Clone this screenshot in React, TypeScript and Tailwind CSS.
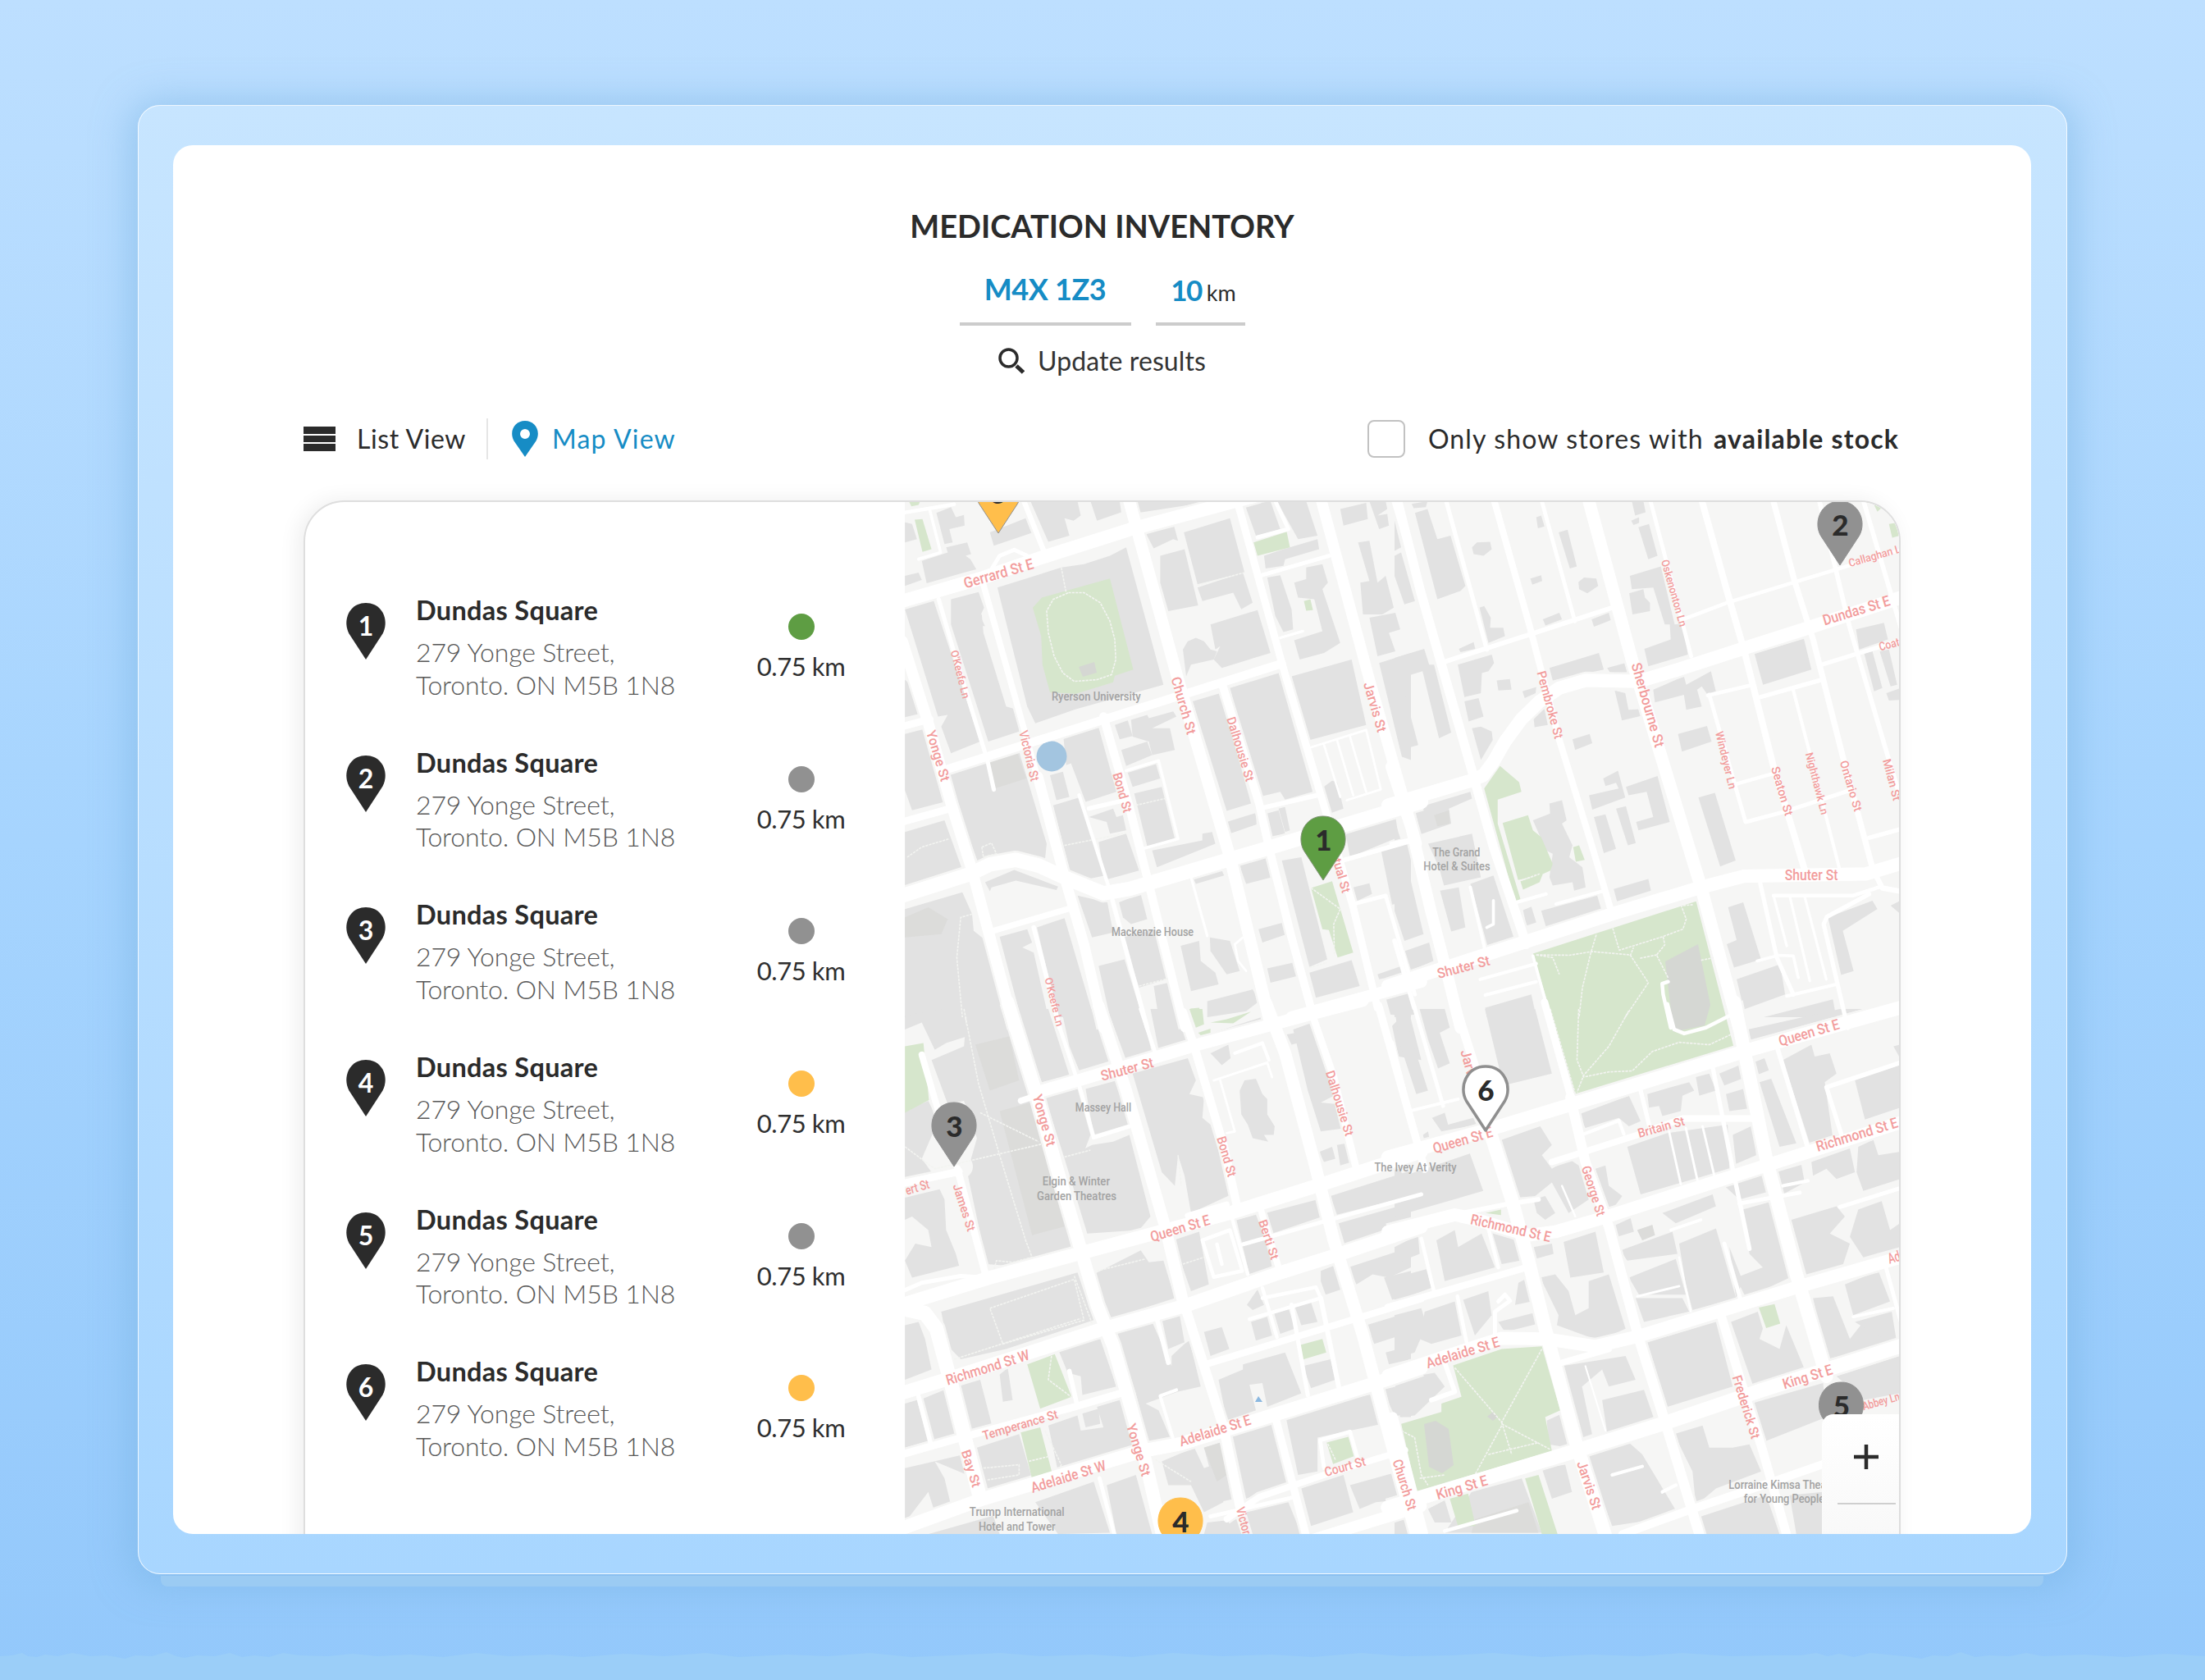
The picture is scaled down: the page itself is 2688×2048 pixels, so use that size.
import React from "react";

type Road = [number, string];
type Label = [string, number, number, number, number, number];
type Tile = {
  transform: string;
  blocks: string[];
  shade: string[];
  parks: string[];
  roads: Road[];
  paths: string[];
  streets: Label[];
  places: Label[];
};

const northWest: Tile = {
  transform: "translate(1100 600) scale(0.39541 0.40816)",
  blocks: [
    "8,90 30,95 45,140 8,150", "105,62 150,45 165,75 190,68 192,100 145,110 155,150 130,155", "60,205 140,180 135,165 200,150 212,185 195,190 210,200 228,230 190,240 75,272", "8,250 50,240 60,262 8,280",
    "270,120 380,78 398,122 282,160", "395,27 540,27 550,70 528,85 500,78 515,130 450,148", "580,27 670,27 675,60 600,85", "718,27 960,27 725,62",
    "8,350 95,320 240,745 150,780 120,700 140,665 110,670", "150,320 235,298 252,345 240,370 255,400 150,395", "150,395 245,365 250,420 320,640 355,650 360,715 265,745", "8,560 35,585 60,660 8,672", "8,722 65,708 130,925 30,950 8,890",
    "293,285 490,225 560,215 640,190 690,165 805,575 535,648 410,690 385,640", "8,1015 130,980 185,1128 8,1180", "130,835 360,775 445,1050 440,1095 340,1080 235,1110", "8,1245 185,1195 215,1260 220,1310 265,1345 330,1568 8,1568",
    "255,1165 345,1128 480,1178 475,1188 350,1160 275,1180 270,1192", "300,1328 385,1305 400,1345 370,1360 405,1375 450,1568 365,1568", "415,1300 500,1272 590,1568 480,1568", "540,1205 632,1225 650,1315 585,1330",
    "497,735 605,702 660,895 565,925 520,810 505,815", "455,845 495,835 515,910 475,920", "465,935 545,912 625,1145 525,1165", "750,122 838,102 850,145 835,140 775,168", "868,120 1010,78 1055,240 910,275", "795,190 870,170 912,338 820,355 795,270",
    "910,285 1050,240 1080,330 1045,350 1020,300 925,325", "950,395 1095,352 1135,480 985,525 960,500 980,460 965,470", "875,550 865,470 880,445 905,435 930,445 950,470 970,475 960,500 890,515", "1057,40 1135,27 1165,110 1090,130", "1155,27 1245,27 1280,130 1220,140", "1115,190 1175,170 1280,140 1285,170 1180,200 1175,220 1120,228",
    "1125,255 1165,248 1200,350 1205,410 1175,418 1150,370", "1208,270 1245,260 1245,225 1295,215 1312,270 1295,290 1350,450 1300,480 1225,500 1208,442 1295,415 1270,320 1220,315", "1200,550 1385,500 1430,695 1250,742", "895,625 980,600 1075,930 1000,952", "1010,585 1160,540 1265,895 1180,918 1165,895 1100,910",
    "655,695 695,682 710,728 670,738", "705,680 755,665 760,675 835,655 845,670 770,705 825,705 840,770 770,785 760,745 710,730", "675,770 755,745 770,785 690,818", "695,838 782,812 795,855 710,880", "715,900 800,880 840,1035 755,1058",
    "575,970 650,945 660,970 680,965 690,1010 640,1020 630,985", "605,1045 690,1020 730,1130 625,1158", "770,1070 925,1040 925,1020 955,1015 965,1050 785,1120", "1000,985 1090,958 1092,992 1010,1020", "1115,962 1160,950 1180,1020 1140,1028", "1160,945 1180,940 1195,1010 1180,1015",
    "1285,890 1325,862 1340,865 1360,945 1310,962", "1350,50 1430,32 1435,80 1360,100", "1440,27 1490,27 1495,50 1465,70 1495,65 1500,100 1470,110", "1405,150 1440,145 1465,270 1490,250 1515,345 1480,365 1420,365 1412,270 1440,265", "1440,375 1520,360 1535,410 1500,420 1520,475 1465,490", "1470,510 1568,480 1568,800 1540,790",
    "1365,1010 1520,968 1530,1030 1380,1090", "1170,1100 1230,1090 1310,1395 1255,1418", "1255,1435 1385,1398 1410,1475 1275,1510", "898,1155 985,1130 992,1145 905,1170", "1038,1112 1120,1092 1138,1150 1060,1170", "1475,1065 1568,1045 1568,1220 1510,1232", "1390,1180 1440,1168 1448,1200 1400,1222",
    "668,1225 735,1200 755,1275 705,1290 680,1270", "1098,1305 1175,1285 1180,1322 1110,1345", "1125,1422 1205,1405 1218,1445 1135,1465", "605,1415 685,1395 740,1568 640,1568", "680,1330 780,1305 830,1450 730,1480", "858,1355 915,1340 920,1400 965,1435 975,1470 890,1490", "948,1330 1010,1340 1040,1430 1000,1440 950,1370", "775,1475 820,1465 845,1550 790,1568", "940,1520 1080,1485 1100,1520 1060,1550 940,1568", "1490,1508 1568,1490 1568,1568 1505,1560", "1465,1440 1540,1415 1545,1440 1470,1455",
  ],
  shade: ["265,800 355,778 382,855 285,885", "8,1270 80,1240 140,1275 120,1320 8,1330"],
  parks: [
    "430,315 640,258 712,530 655,548 650,568 535,602 455,598 432,515 428,430 402,345", "1083,150 1185,118 1195,165 1095,190", "1238,325 1258,320 1266,352 1245,354", "1260,1182 1325,1162 1390,1375 1342,1390 1315,1308 1295,1305", "38,82 62,80 90,170 62,178", "20,27 55,27 50,38 28,42", "888,1542 915,1540 925,1568 895,1568",
  ],
  roads: [
    [40, "-10,328 250,255 430,195 700,112 1100,8"], [34, "0,445 80,690 150,930 215,1130 262,1300 345,1600"], [13, "112,320 160,480 262,800 282,888"], [19, "248,270 370,690 430,900"], [32, "418,850 500,1150 560,1350 620,1600"],
    [26, "130,830 700,655 1170,512"], [37, "692,0 740,170 850,560 1010,1090 1135,1590"], [26, "620,670 700,940 760,1170 870,1600"], [25, "985,570 1100,930 1130,1060 1200,1330 1265,1560"], [23, "1025,0 1170,510 1310,970 1390,1240 1465,1540"], [34, "1285,0 1440,560 1585,1050"],
    [43, "-10,1208 210,1140 270,1112 350,1098 420,1115 510,1155 620,1198 700,1185 1120,1065 1600,925"], [22, "0,700 85,678"], [22, "0,985 155,943"], [36, "1200,1568 1600,1462"], [18, "280,1310 520,1242"], [14, "405,1300 485,1600"], [14, "648,1220 755,1600"], [11, "545,905 640,1190"], [13, "575,945 695,918"],
    [9, "690,832 790,802 850,1035 740,1065"], [12, "1390,1230 1490,1205 1580,1500"], [8, "890,1150 940,1325"], [14, "1350,1102 1580,1038"], [14, "1100,945 1280,905"], [12, "1100,250 1315,190"], [7, "1250,765 1430,710 1475,888 1370,920"], [7, "1300,755 1350,910"], [7, "1340,740 1390,905"], [7, "1380,730 1430,895"],
    [16, "375,27 440,185"], [11, "0,62 160,36"], [9, "85,55 118,180 50,200"], [20, "1510,0 1590,260"], [12, "1095,135 1190,110 1150,27"], [12, "275,230 300,190 345,172 385,190"], [8, "1165,435 1235,415"], [7, "1060,1430 1035,1400 1025,1350 1050,1330"],
  ],
  paths: ["490,225 505,300", "512,300 560,300 610,330 640,385 655,440 658,500 645,545 600,560 530,565 495,540 468,490 450,420 445,355 465,320 512,300", "910,278 1055,240", "15,1090 60,1060 145,1035", "245,1060 275,1048 290,1080 250,1090 245,1060", "1260,1182 1350,1245 1330,1290 1332,1385", "215,1260 180,1270 168,1390 185,1568", "500,1055 690,1018", "720,935 810,915", "730,1475 830,1450", "1255,1420 1310,1405"],
  streets: [
    ["Gerrard St E", 190, 272, 403, 212, 40], ["O'Keefe Ln", 160, 472, 198, 615, 29], ["Yonge St", 88, 712, 134, 862, 37], ["Victoria St", 373, 712, 410, 862, 34], ["Church St", 843, 552, 893, 722, 37], ["Bond St", 662, 838, 696, 955, 35], ["Dalhousie St", 1013, 672, 1073, 862, 34], ["Jarvis St", 1436, 568, 1480, 715, 37], ["tual St", 1340, 1095, 1370, 1195, 34], ["O'Keefe Ln", 450, 1450, 487, 1594, 29],
  ],
  places: [["Ryerson University", 460, 611, 735, 611, 32], ["Mackenzie House", 645, 1313, 898, 1313, 32]],
};

const northEast: Tile = {
  transform: "translate(1700 600) scale(0.40179 0.40816)",
  blocks: [
    "62,62 100,50 130,140 170,130 215,280 200,295 130,320", "52,35 100,27 95,45 58,48", "0,85 20,165 0,175", "0,190 20,180 62,325 30,335 0,250", "258,345 272,340 292,375 290,405 330,405 335,430 285,450", "235,165 250,150 290,148 295,170 270,190 240,185", "430,75 445,70 455,102 435,108", "498,120 525,112 553,222 532,228",
    "412,258 445,248 448,265 418,276", "558,268 575,255 612,258 618,280 585,302 560,290", "450,380 500,360 508,380 458,398", "598,380 650,360 656,382 605,402", "195,468 240,448 245,468 200,478", "720,27 755,27 762,60 730,70", "740,105 772,95 798,190 770,200", "718,85 742,75 742,92 725,98", "714,250 808,222 850,395 875,392 890,485 770,520 758,468 838,440 835,395 820,395 785,285 720,290", "712,302 755,290 760,315 775,330 775,355 722,365", "0,495 90,468 105,515 120,515 172,718 135,735 85,535 18,555 72,755 18,770 0,690",
    "192,515 295,485 302,510 285,535 265,540 262,600 212,612", "212,625 255,615 270,670 225,685", "310,562 350,558 355,590 315,592", "235,705 262,700 295,715 298,740 262,800", "388,595 430,582 428,600 395,615", "470,525 620,480 635,530 480,562", "645,525 700,510 708,538 655,540", "668,592 700,600 710,650 745,648 748,668 690,682", "420,660 455,648 465,695 425,702", "540,738 592,722 600,750 548,770", "785,590 878,550 885,575 960,535 975,595 950,605 932,580 918,590 932,640 885,650 878,605 790,628", "1092,482 1242,438 1265,530 1118,575", "1400,410 1485,390 1497,440 1410,470",
    "1425,482 1450,475 1480,585 1455,595", "1472,475 1500,470 1525,575 1505,580", "1492,600 1535,585 1535,620 1500,622", "860,722 948,698 962,745 872,775", "633,855 678,832 700,912 600,948 590,905 680,885 672,868 640,878", "702,880 798,848 835,985 740,1010 733,985 785,970 765,895 710,905", "605,970 640,962 672,1065 635,1078", "672,945 702,938 732,1048 708,1055", "922,912 972,898 1035,1100 988,1118", "62,945 145,920 230,895 235,915 165,945 172,990 78,1022",
    "0,980 18,1035 0,1040", "420,980 472,960 470,930 508,920 522,980 508,990 540,1055 530,1090 570,1120 580,1180 545,1190 540,1165 480,1175 470,1150 480,1080 460,1070", "102,1050 235,1020 262,1150 150,1175 135,1120", "0,1055 25,1060 88,1320 30,1340 0,1250", "138,1190 195,1180 215,1300 172,1312", "230,1170 300,1145 365,1340 285,1365", "32,1370 105,1345 118,1400 50,1428", "390,1248 415,1238 430,1285 400,1295", "445,1250 615,1205 628,1248 460,1300", "665,1185 770,1155 778,1190 675,1222", "1012,1240 1058,1225 1112,1395 1030,1420 1008,1350 1038,1338", "1038,1455 1170,1410 1185,1500 1060,1545", "1315,1270 1450,1220 1465,1245 1360,1310 1393,1430 1355,1442", "1505,1235 1535,1220 1535,1260", "275,1540 415,1500 430,1568 280,1568", "0,1500 45,1495 60,1560 0,1568", "1120,1568 1330,1515 1340,1568",
  ],
  shade: ["120,965 165,950 168,990 130,998"],
  parks: ["272,885 320,818 378,866 385,895 313,918 313,990 382,1215 366,1222", "328,988 405,965 420,1010 445,1030 480,1110 473,1130 440,1145 375,1158", "382,1162 450,1140 440,1165 390,1187", "542,1060 560,1055 577,1098 550,1104", "420,1378 915,1222 1028,1653 548,1797", "1455,38 1480,45 1465,58", "1500,95 1520,92 1533,130 1510,136"],
  roads: [
    [35, "-10,820 50,1000 110,1250 160,1440 200,1600"], [28, "5,10 80,300 240,850 300,1060 400,1350"], [13, "155,20 280,470"], [20, "298,10 410,400 500,740 600,1060 660,1260"], [12, "445,20 547,385"], [38, "585,10 720,500 800,760 930,1180 1045,1600"], [12, "775,20 900,490"], [20, "928,10 1010,300 1060,470 1150,820 1245,1130"], [18, "1145,10 1215,270 1270,440 1360,790 1452,1130"], [14, "1285,10 1380,400 1410,500 1500,800 1550,960"], [14, "1418,10 1550,450"],
    [40, "-20,935 230,862 270,845 300,805 335,745 385,678 440,625 500,585 580,562 740,565 860,530 1080,460 1240,410 1560,307"], [14, "150,507 410,425 670,342"], [11, "870,382 1010,330 1210,270 1560,165"], [13, "1290,517 1560,435"], [11, "950,607 1080,577"], [13, "1110,612 1290,562"], [12, "955,605 1065,985 1180,955 1390,888"], [11, "1035,872 1150,840"], [10, "1210,592 1260,780 1350,1125"], [13, "1440,1032 1560,1000"],
    [40, "-20,1475 400,1342 660,1260 930,1180 1060,1147 1430,1140 1560,1102"], [16, "1450,1125 1480,1182 1550,1195"], [13, "1110,1170 1160,1390 1210,1500"], [8, "1150,1205 1190,1355"], [8, "1200,1210 1260,1460"], [8, "1245,1210 1310,1455"], [11, "1150,1205 1390,1205 1475,1178"], [13, "1375,1600 1302,1290 1312,1268 1440,1200"], [10, "1190,1505 1340,1470"], [9, "1100,1400 1165,1383 1210,1385 1225,1450"], [12, "-10,1050 40,1040"], [14, "0,1340 60,1540"], [10, "230,1180 280,1390"], [10, "370,1225 460,1200"], [10, "490,1230 630,1192"], [10, "260,1455 430,1408"], [10, "275,1502 430,1462"], [9, "420,1385 480,1600"], [11, "830,1462 812,1468 815,1500 838,1600"], [9, "300,1220 300,1290 280,1300"],
  ],
  paths: ["430,1382 530,1383 600,1372 715,1382 770,1465 700,1568", "430,1382 480,1390 500,1440", "612,1322 595,1378 570,1480 560,1568", "662,1302 682,1368 812,1328 875,1305 885,1275 870,1235 905,1232", "815,1328 820,1352 795,1382 830,1450", "715,1385 725,1360", "745,1392 795,1382", "930,1398 970,1390", "382,1160 440,1140"],
  streets: [
    ["Oskenonton Ln", 820, 202, 877, 400, 29], ["Callaghan L", 1378, 212, 1534, 168, 29], ["Dundas St E", 1300, 383, 1502, 322, 39], ["Coat", 1470, 462, 1531, 446, 31], ["Pembroke St", 445, 535, 500, 735, 34], ["Sherbourne St", 733, 510, 806, 760, 38], ["Windeyer Ln", 985, 715, 1027, 885, 30], ["Seaton St", 1155, 820, 1198, 965, 32], ["Nighthawk Ln", 1258, 778, 1306, 962, 29], ["Ontario St", 1363, 802, 1408, 952, 31], ["Milan St", 1493, 797, 1526, 920, 31], ["Shuter St", 1184, 1143, 1345, 1143, 40], ["Shuter St", 130, 1438, 288, 1397, 37],
  ],
  places: [["The Grand", 115, 1076, 260, 1076, 32], ["Hotel & Suites", 88, 1117, 290, 1117, 32]],
};

const southWest: Tile = {
  transform: "translate(1100 1230) scale(0.39541 0.41459)",
  blocks: [
    "8,20 130,0 190,0 200,80 135,100 100,120 60,40 8,60", "200,0 315,0 345,90 395,260 430,290 520,700 390,760 260,750 200,480 230,380 190,270 140,280 90,150 190,110", "8,300 80,270 110,330 60,440 8,470", "350,0 450,0 470,60 515,195 430,215", "490,0 610,0 640,60 650,150 545,180 515,110", "640,20 735,0 770,130 690,150", "765,0 850,0 870,60 880,100 790,118", "8,400 60,440 90,480 8,495",
    "8,555 115,530 130,560 135,650 165,720 175,755 30,790 8,740 40,690 90,700 80,650 30,610 8,620", "8,930 50,920 70,970 90,1060 8,1090", "440,260 540,235 580,370 560,420 500,440", "565,235 700,200 730,330 590,370", "500,440 585,400 650,390 700,370 765,610 730,650 570,660", "710,190 880,145 905,210 885,250 930,260 925,320 950,340 1015,545 890,600 870,490 850,430 840,520 800,480",
    "1040,240 1055,210 1090,205 1110,250 1125,265 1125,310 1148,345 1145,370 1115,370 1128,390 1080,380 1065,340 1045,310", "950,130 1005,105 1012,145 985,165", "925,80 1105,25 1120,50 950,85", "1185,75 1215,70 1220,100 1200,105", "1205,60 1265,40 1340,250 1290,275 1340,280 1370,350 1290,360 1250,240", "1285,420 1325,405 1335,440 1300,450", "1340,400 1370,395 1385,450 1350,460", "1560,0 1600,150 1530,140 1510,50",
    "120,890 540,775 590,915 320,1000 180,1030 140,990", "590,780 735,710 760,745 805,740 840,850 630,915", "835,680 915,655 945,810 890,830", "1030,620 1090,605 1125,690 1140,760 1070,780", "1120,600 1280,560 1295,610 1140,660", "1320,550 1568,475 1568,550 1340,605", "1345,630 1568,570 1568,640 1365,695",
    "660,950 770,920 830,1050 830,1020 870,985 885,975 920,1110 850,1125 750,1160 790,1180 830,1270 760,1280 720,1130", "800,910 855,900 870,980 820,1000", "930,950 985,935 1008,1000 950,1020", "975,1090 1050,1060 1050,1045 1180,1010 1230,1130 1125,1170 1110,1100 1070,1105 1090,1180 1000,1210", "1062,870 1095,825 1115,870 1080,885", "1075,920 1125,905 1140,960 1090,975", "1145,890 1190,878 1210,940 1165,955", "1210,875 1260,862 1280,920 1230,930", "1290,770 1330,755 1352,825 1305,840 1290,800", "1375,760 1568,700 1568,760 1500,790 1450,780 1400,810", "1485,790 1568,770 1568,840 1510,855", "1430,930 1568,890 1568,950 1455,985", "1235,1050 1320,1030 1335,1090 1260,1115",
    "8,1160 45,1150 80,1270 8,1290", "65,1145 130,1120 175,1245 100,1270", "170,1110 240,1090 275,1220 200,1245", "300,1075 325,1055 340,1150 310,1155", "480,1000 610,970 660,1110 555,1135 550,1080 510,1070", "8,1350 190,1310 200,1370 100,1330 130,1380 150,1460 100,1480 80,1420 8,1510", "230,1290 360,1250 400,1380 265,1415", "450,1225 540,1195 550,1240 620,1230 600,1170 670,1150 710,1290 480,1360", "555,1190 605,1175 610,1220 565,1230", "410,1450 590,1390 640,1540 480,1544", "800,1330 900,1290 930,1350 960,1340 990,1450 930,1480 890,1400 820,1400", "930,1290 985,1275 1025,1440 975,1450", "1015,1240 1130,1200 1200,1390 1060,1440",
    "1180,1190 1460,1130 1480,1220 1380,1240 1280,1260 1280,1360 1220,1370", "1230,1410 1360,1370 1390,1480 1260,1520", "1380,1400 1568,1350 1568,1440 1460,1450 1410,1470", "1060,1480 1190,1450 1230,1544 1080,1544", "940,1510 1030,1500 1045,1544 930,1544", "630,1400 720,1370 770,1544 660,1544", "80,1544 280,1490 300,1544", "1480,1120 1568,1100 1568,1200 1520,1200", "1490,1010 1568,990 1568,1030 1500,1045",
  ],
  shade: ["225,105 330,80 360,210 270,240", "300,300 395,275 500,640 400,665", "930,1290 980,1275 1000,1370 970,1390"],
  parks: ["8,110 65,100 82,268 8,305", "385,1045 470,1015 522,1140 425,1175", "365,1245 425,1230 462,1365 400,1382", "1218,990 1295,970 1307,1010 1227,1033", "1308,1275 1375,1258 1392,1315 1328,1338", "885,0 925,0 930,45 905,55", "912,70 950,58 950,70 920,77", "950,40 1000,30 1075,8 1020,42"],
  roads: [
    [40, "325,-20 410,240 480,480 600,870 650,990 740,1290 805,1560"], [12, "480,40 550,240 590,378 700,345"], [36, "605,-10 690,240 810,640 870,880"], [30, "870,870 990,1230 1045,1480"], [26, "865,10 900,110 990,400 1032,580"], [12, "735,0 780,130"], [38, "1120,-20 1180,130 1270,450 1330,680 1420,960 1500,1250 1600,1600"], [22, "1265,20 1330,200 1402,480"], [24, "1468,-10 1610,470"],
    [36, "415,245 560,205 910,105 1260,15 1420,-25"], [18, "365,270 430,250"], [40, "-10,872 270,790 560,715 1010,600 1310,510 1600,420"], [40, "-10,1132 140,1088 620,940 880,870 1150,780 1350,720 1600,640"], [44, "20,885 70,895 105,940 150,1100 240,1440"], [20, "60,135 120,330"], [22, "170,470 262,800"], [22, "-10,515 175,478"], [12, "0,830 60,805 180,785 262,790"],
    [22, "-10,1312 190,1258 530,1170 680,1128"], [14, "50,1140 88,1280"], [40, "-10,1530 250,1440 740,1300 860,1278 1460,1100 1600,1055"], [20, "935,1045 1600,852"], [20, "1105,590 1160,760"], [12, "1050,692 1310,622 1600,545"], [11, "1015,610 1065,780"], [11, "925,680 1010,650 1048,770 960,788 925,680"], [11, "970,692 985,750"], [14, "782,900 820,1040"], [10, "845,1120 795,1138 840,1280"], [11, "1110,820 1155,965"], [11, "1070,912 1290,850 1275,818 1110,850"], [13, "1200,870 1250,1135"], [15, "1290,850 1345,1110"],
    [24, "1150,1200 1245,1550"], [19, "1000,1500 1100,1435 1300,1370 1550,1297"], [12, "1300,1350 1288,1268 1380,1243 1405,1325"], [12, "950,1492 1210,1435"], [34, "1240,1568 1600,1462"], [12, "608,1380 655,1550"], [14, "515,1065 540,1170"], [7, "960,210 1125,158 1140,200"], [7, "980,210 1025,360 1000,365"], [10, "1025,130 1110,100 1130,150"], [18, "880,608 1000,575"],
  ],
  paths: ["190,0 235,220 300,430 380,680 400,730 340,745 290,740 280,775", "270,880 530,795 560,915 310,985 270,880", "160,1030 550,910", "530,785 585,925", "240,305 420,390", "8,405 100,470 440,395", "500,435 580,415", "850,430 860,520", "865,750 930,730", "390,1330 455,1315", "460,1020 450,1090 520,1140", "440,1240 490,1340 470,1380", "1335,1325 1310,1275", "600,770 750,735", "250,1350 360,1340 360,1370 260,1385", "780,1325 890,1390"],
  streets: [
    ["Shuter St", 612, 197, 773, 156, 37], ["Yonge St", 416, 252, 460, 402, 37], ["Bond St", 983, 375, 1018, 492, 35], ["Dalhousie St", 1318, 182, 1380, 372, 34], ["ert St", 10, 534, 82, 513, 34], ["James St", 168, 515, 214, 652, 33], ["Queen St E", 765, 670, 947, 618, 38], ["Berti St", 1110, 620, 1150, 735, 33], ["Richmond St W", 135, 1092, 390, 1015, 38], ["Temperance St", 248, 1255, 478, 1190, 33], ["Bay St", 195, 1297, 230, 1405, 35], ["Adelaide St W", 397, 1408, 626, 1340, 38], ["Yonge St", 705, 1220, 753, 1372, 37], ["Adelaide St E", 855, 1272, 1073, 1206, 38], ["Court St", 1302, 1362, 1427, 1328, 34], ["Victor", 1042, 1465, 1064, 1544, 34],
  ],
  places: [["Massey Hall", 533, 290, 706, 290, 32], ["Elgin & Winter", 432, 507, 640, 507, 32], ["Garden Theatres", 415, 550, 660, 550, 32], ["Trump International", 207, 1479, 500, 1479, 32], ["Hotel and Tower", 235, 1521, 472, 1521, 32]],
};

const southEast: Tile = {
  transform: "translate(1700 1230) scale(0.40816 0.41459)",
  blocks: [
    "0,0 50,0 45,70 100,240 65,250 15,100", "75,0 150,0 165,55 135,70 165,160 130,175 100,90", "270,0 420,0 470,190 325,225", "112,320 150,305 160,340 235,320 245,340 140,360", "0,460 30,490 225,425 265,535 0,610", "85,370 100,360 105,385 90,392",
    "320,385 435,345 470,400 440,430 470,470 520,440 550,460 580,560 520,600 470,510 420,550 365,555", "550,310 700,255 735,330 700,345 670,320 570,350", "755,250 880,215 895,240 860,255 855,300 800,315 790,285 760,290", "695,405 815,365 995,340 1000,470 735,545", "900,200 940,190 960,240 910,255", "970,190 1030,165 1050,200 985,225", "990,250 1060,230 1075,290 1000,300", "1010,370 1075,340 1080,430 1020,455",
    "1055,60 1330,0 1400,0 1065,90", "1078,155 1105,145 1118,180 1088,192", "1090,215 1125,205 1200,395 1150,405", "1160,150 1245,105 1255,140 1300,130 1320,190 1285,215 1310,385 1240,395", "1375,210 1510,165 1510,290 1405,325", "1490,110 1510,105 1510,145", "1140,480 1215,458 1225,510 1160,545", "1245,450 1360,410 1375,480 1320,500 1290,470 1250,490", "1385,405 1430,385 1445,430 1510,420 1510,500 1400,535 1380,480", "600,470 630,460 640,520 680,550 650,590 615,560",
    "415,560 450,550 480,600 450,620 425,600", "0,700 70,665 75,720 0,750", "125,680 180,650 190,700 260,660 300,760 150,800", "290,650 360,660 375,740 320,750", "0,790 95,765 110,820 0,860", "0,900 80,880 95,930 60,1010 0,1030", "90,890 180,860 200,960 110,985 75,970", "205,855 280,830 290,900 240,960", "310,920 430,890 430,925 330,950", "370,805 390,795 410,860 360,870",
    "415,700 470,690 475,720 420,735", "505,685 600,655 625,775 525,790", "435,790 480,780 520,830 540,900 580,880 580,800 640,780 690,940 610,975 485,930 490,900", "650,640 705,615 715,655 665,670", "725,650 770,635 775,665 740,680", "675,710 830,655 845,720 695,740", "700,790 840,735 870,840 730,840", "850,690 960,645 1020,850 890,885 870,810", "800,600 950,545 960,580 840,630", "720,850 860,850 880,890 745,920", "985,520 1110,480 1125,535 1030,560",
    "1040,590 1130,565 1180,790 1050,850 1020,790 1100,760 1060,720", "1000,700 1040,800 1020,850", "1185,620 1320,580 1345,610 1300,660 1360,690 1340,750 1230,780", "1385,590 1455,565 1480,650 1510,630 1510,700 1400,730 1360,670", "1250,850 1310,845 1360,970 1400,920 1500,980 1290,1030", "1345,810 1445,770 1480,860 1370,900", "1375,920 1485,890 1500,980 1440,960", "755,980 960,920 1010,1110 815,1170", "1005,920 1085,890 1100,940 1090,970 1150,1000 1170,930 1225,1060 1070,1105",
    "500,1050 690,1020 720,1090 640,1110 620,1060 560,1110 590,1250 560,1260", "620,1150 745,1120 775,1205 635,1245", "0,1090 120,1070 150,1110 60,1195 15,1200", "455,1210 500,1190 520,1290 460,1280", "570,1310 700,1275 740,1310 850,1490 650,1520", "835,1250 920,1225 940,1290 1010,1290 1060,1280 1095,1360 960,1410 900,1460 890,1360", "1065,1160 1280,1100 1290,1200 1110,1270", "1320,1080 1510,1020 1510,1130 1400,1150", "100,1470 150,1445 170,1510 120,1510", "230,1420 380,1380 440,1540 150,1540", "440,1350 510,1340 530,1420 470,1440", "890,1500 1110,1430 1150,1544 910,1544", "0,1500 30,1490 50,1544 0,1544",
    "1180,1430 1280,1420 1280,1544 1200,1544",
  ],
  shade: ["725,650 770,635 778,665 740,680", "240,1500 400,1450 430,1540 230,1540"],
  parks: ["175,1048 320,1000 440,992 495,1180 450,1200 470,1300 65,1418 20,1220 140,1185 140,1160 200,1140", "1088,878 1135,868 1152,925 1110,938", "272,600 318,590 318,606", "165,1440 220,1425 242,1520 190,1522", "390,1380 430,1370 487,1544 440,1544"],
  roads: [
    [12, "58,-10 145,285"], [26, "182,-10 250,200 280,330"], [40, "275,330 350,560 400,740 450,940 540,1270 640,1580"], [18, "-10,100 70,410"], [22, "448,-20 530,270"], [30, "525,260 570,450 640,640 730,970 810,1220 915,1560"], [40, "1015,-20 1110,440 1200,780 1290,1080"],
    [40, "-20,436 280,355 530,280 730,220 1060,120 1540,-12"], [38, "-20,655 180,605 240,618 400,665 480,655 620,615 1110,460 1540,325"], [14, "50,630 330,575 430,560"], [20, "-20,877 395,760"], [38, "-20,1078 150,1022 320,968 450,970 600,992 730,962 1230,810 1540,722"], [18, "500,1040 640,1000"], [42, "-20,1466 540,1300 800,1220 1100,1120 1540,982"], [27, "975,900 1030,1080 1100,1300 1175,1560"], [24, "680,1545 890,1470 1100,1400 1290,1335"],
    [19, "470,450 550,425 720,372 860,322 1080,322"], [13, "735,240 760,340"], [13, "950,170 1010,470 1060,705"], [12, "985,690 1035,860"], [14, "1145,120 1232,400"], [13, "1335,370 1290,230 1540,148"], [12, "1330,582 1540,518"], [12, "1030,572 1210,540"], [12, "1465,750 1515,930"], [9, "1370,905 1490,880"], [10, "560,370 670,328 685,368"], [11, "80,675 120,840"], [11, "280,645 310,760"], [11, "188,845 215,980"], [12, "300,970 300,890 345,858 330,840 310,860"], [14, "150,1040 180,1125 110,1150"], [30, "-5,1200 85,1540"], [11, "150,1535 365,1475"], [7, "820,360 855,515"], [7, "870,350 905,505"], [7, "920,345 955,490"], [9, "825,650 915,620"], [9, "45,300 190,265"], [7, "725,845 850,815"], [6, "500,520 540,610"], [6, "850,730 885,890"], [10, "650,1370 740,1345"], [10, "800,1420 840,1400"], [10, "1160,520 1235,505"], [5, "570,1050 630,1240"],
    [11, "815,-15 835,60 865,72 930,55 1000,20"],
  ],
  paths: ["550,0 545,150 565,200 640,185 710,182 770,125 850,98 940,105 1005,75", "700,5 640,110 565,195 545,245", "465,0 540,250", "180,1055 320,1215 440,1000", "320,1215 350,1310", "320,1220 465,1295", "320,1225 240,1370", "280,1310 430,1275", "20,1240 60,1260 80,1370 100,1400", "75,1380 150,1370"],
  streets: [
    ["Queen St E", 1148, 95, 1327, 43, 38], ["Jarvis St", 211, 120, 253, 270, 37], ["Queen St E", 115, 410, 292, 360, 38], ["Britain St", 727, 366, 865, 328, 33], ["Richmond St E", 1260, 405, 1502, 332, 38], ["George St", 571, 462, 618, 607, 34], ["Richmond St E", 228, 617, 467, 670, 38], ["Ad", 1474, 735, 1509, 724, 38], ["King St E", 1160, 1103, 1307, 1058, 38], ["Frederick St", 1022, 1078, 1080, 1262, 35], ["Abbey Ln", 1398, 1168, 1508, 1138, 30], ["King St E", 125, 1428, 277, 1384, 38], ["Adelaide St E", 95, 1042, 312, 977, 38], ["Church St", 8, 1325, 54, 1472, 36], ["Jarvis St", 558, 1330, 606, 1470, 37],
  ],
  places: [["The Ivey At Verity", -60, 464, 185, 464, 32], ["Lorraine Kimsa Thea", 998, 1398, 1290, 1398, 32], ["for Young People", 1043, 1439, 1284, 1439, 32]],
};

const tiles = [northWest, northEast, southWest, southEast];

function MapText({ label, color, scale }: { label: Label; color: string; scale: number }) {
  const [text, x1, y1, x2, y2, base] = label;
  const size = base * scale;
  const angle = (Math.atan2(y2 - y1, x2 - x1) * 180) / Math.PI;
  const length = Math.hypot(x2 - x1, y2 - y1);
  return (
    <text transform={`translate(${x1} ${y1}) rotate(${angle})`} y={size * 0.36} fontSize={size} textLength={length} lengthAdjust="spacingAndGlyphs" fill={color}>
      {text}
    </text>
  );
}

type Pin = { n: string; x: number; tip: number; fill: string; stroke?: string };

const mapPins: Pin[] = [
  { n: "5", x: 1217, tip: 650, fill: "#ffbe4b", stroke: "#8f8f8f" },
  { n: "2", x: 2243, tip: 689, fill: "#919191" },
  { n: "1", x: 1613, tip: 1073, fill: "#5e9d43", stroke: "#7f9275" },
  { n: "3", x: 1163, tip: 1422, fill: "#919191" },
  { n: "4", x: 1439, tip: 1904, fill: "#ffbe4b" },
  { n: "5", x: 2244.5, tip: 1763, fill: "#919191" },
  { n: "6", x: 1811, tip: 1378, fill: "#ffffff", stroke: "#8f8f8f" },
];

function MapPin({ pin }: { pin: Pin }) {
  const thick = pin.n === "6";
  return (
    <g transform={`translate(${pin.x} ${pin.tip})`}>
      <path
        d="M0 0L-23.500 -36C-33 -53 -23 -78 0 -78C23 -78 33 -53 23.500 -36Z"
        fill={pin.fill}
        stroke={pin.stroke ?? pin.fill}
        strokeWidth={thick ? 3.5 : 1}
        strokeLinejoin="round"
      />
      <text x="0.500" y="-36" textAnchor="middle" fontSize="35" fontWeight="900" fill="#2b2b2b" className="font-['Lato',sans-serif]">
        {pin.n}
      </text>
    </g>
  );
}

function CityMap() {
  return (
    <svg viewBox="1103 612 1213 1258" className="block h-[1258px] w-[1213px]">
      <rect x="1103" y="612" width="1213" height="1258" fill="#f6f6f5" />
      {tiles.map((t, i) => (
        <g key={i} transform={t.transform}>
          {t.blocks.map((p, k) => <polygon key={k} points={p} fill="#e2e2e2" />)}
          {t.shade.map((p, k) => <polygon key={k} points={p} fill="#dcdcda" />)}
        </g>
      ))}
      {tiles.map((t, i) => (
        <g key={i} transform={t.transform} fill="none" stroke="#f6f6f5" strokeLinejoin="round">
          {t.roads.filter(([w]) => w >= 19).map(([w, p], k) => <polyline key={k} points={p} strokeWidth={w + 12} />)}
        </g>
      ))}
      {tiles.map((t, i) => (
        <g key={i} transform={t.transform}>
          {t.parks.map((p, k) => <polygon key={k} points={p} fill="#d6e6cc" />)}
        </g>
      ))}
      <g fill="#d5d7d3">
        <path d="M2030 1172L2070 1151L2085 1225L2078 1250L2040 1258Z" />
        <path d="M1736 1736L1750 1732L1766 1742L1772 1786L1758 1796L1742 1788Z" />
        <path d="M1813 1727L1820 1721L1826 1727L1820 1732Z" />
        <path d="M1315 813L1334 807L1337 820L1320 825Z" />
      </g>
      <circle cx="1282" cy="922" r="18.5" fill="#a3c5e0" />
      <path d="M1530 1709L1534 1702L1539 1709Z" fill="#8bb8e0" />
      <circle cx="1171" cy="1422" r="15" fill="#f6f6f5" />
      {tiles.map((t, i) => (
        <g key={i} transform={t.transform} fill="none" strokeLinejoin="round">
          {t.paths.map((p, k) => <polyline key={k} points={p} stroke="#f3f4f1" strokeWidth="4" strokeDasharray="8 3" />)}
        </g>
      ))}
      {tiles.map((t, i) => (
        <g key={i} transform={t.transform} fill="none" stroke="#ffffff" strokeLinecap="round" strokeLinejoin="round">
          {t.roads.map(([w, p], k) => <polyline key={k} points={p} strokeWidth={w} />)}
        </g>
      ))}
      {tiles.map((t, i) => (
        <g key={i} transform={t.transform} className="font-['Roboto',sans-serif]" fontWeight="500">
          {t.streets.map((l, k) => <MapText key={k} label={l} color="#f29c9c" scale={1.13} />)}
          {t.places.map((l, k) => <MapText key={k} label={l} color="#a3a3a3" scale={1.08} />)}
        </g>
      ))}
      {mapPins.map((p, k) => <MapPin key={k} pin={p} />)}
    </svg>
  );
}

const stores = [
  { n: 1, dot: "bg-[#5e9d43]" },
  { n: 2, dot: "bg-[#919191]" },
  { n: 3, dot: "bg-[#919191]" },
  { n: 4, dot: "bg-[#ffbe4b]" },
  { n: 5, dot: "bg-[#919191]" },
  { n: 6, dot: "bg-[#ffbe4b]" },
];

function StoreRow({ n, dot }: { n: number; dot: string }) {
  return (
    <li className="flex h-[185.7px] items-start">
      <svg viewBox="0 0 48 69" className="mt-[15px] h-[69px] w-[48px] shrink-0">
        <path d="M24 69L3.500 37.500C-5 21 4 0 24 0C44 0 53 21 44.500 37.500Z" fill="#2b2b2b" />
        <text x="24" y="39.500" textAnchor="middle" fontSize="32" fontWeight="700" fill="#ffffff">{n}</text>
      </svg>
      <div className="ml-[37px] w-[400px] shrink-0">
        <h2 className="mt-[1px] h-[46px] text-[32.500px] leading-[46px] font-bold tracking-[0.3px] whitespace-nowrap text-[#2b2b2b]">Dundas Square</h2>
        <p className="mt-[8px] text-[32px] leading-[39.5px] font-light tracking-[-0.15px] whitespace-nowrap text-[#585858]">
          279 Yonge Street,<br />Toronto. ON M5B 1N8
        </p>
      </div>
      <div className="flex w-[139px] flex-col items-center pt-[28px]">
        <span className={`h-[32px] w-[32px] rounded-full ${dot}`} />
        <span className="mt-[12px] text-[31px] leading-[40px] tracking-[-0.4px] whitespace-nowrap text-[#2f2f2f]">0.75 km</span>
      </div>
    </li>
  );
}

export default function App() {
  return (
    <div className="relative flex h-[2048px] w-[2688px] flex-col items-center overflow-hidden bg-linear-to-b from-[#bddfff] via-[#a6d4fe] to-[#93c8fb] pt-[128px] font-['Lato',sans-serif] text-[#2b2b2b]">
      <div className="relative z-10 h-[1791px] w-[2352px] shrink-0 rounded-[27px] border border-white/80 bg-linear-to-b from-[#c7e5ff] to-[#a8d6ff] pt-[48px] pl-[42px] shadow-[0_4px_44px_10px_rgba(118,178,226,0.5)]">
        <main className="flex h-[1693px] w-[2265px] flex-col overflow-hidden rounded-[24px] bg-white">
          <header className="flex flex-col items-center pt-[74px]">
            <h1 className="h-[48px] text-[38px] leading-[48px] font-bold whitespace-nowrap">MEDICATION INVENTORY</h1>
            <div className="mt-[29px] flex gap-[30px]">
              <div className="flex h-[69px] w-[209px] justify-center border-b-4 border-[#cccccc] text-[36px] leading-[49px] font-bold tracking-[-0.4px] text-[#168cc5]">M4X 1Z3</div>
              <div className="flex h-[69px] w-[109px] items-baseline justify-center gap-[6px] border-b-4 border-[#cccccc] pl-[8px] leading-[50px]">
                <span className="text-[35px] font-bold tracking-[-1.5px] text-[#168cc5]">10</span>
                <span className="text-[27px]">km</span>
              </div>
            </div>
            <button className="mt-[19px] flex h-[48px] items-center gap-[16px] text-[32px] leading-[48px] tracking-[0.1px] text-[#333333]">
              <svg viewBox="0 0 32 32" className="h-[32px] w-[32px]" fill="none" stroke="#2b2b2b">
                <circle cx="12.500" cy="12.500" r="10.500" strokeWidth="3.500" />
                <path d="M22 22L30.500 30" strokeWidth="5" />
              </svg>
              Update results
            </button>
          </header>

          <div className="mt-[44px] mr-[161px] ml-[159px] flex h-[54px] shrink-0 items-center text-[32px]">
            <span className="flex w-[39px] flex-col gap-[2px]">
              <i className="h-[8.500px] bg-[#2b2b2b]" />
              <i className="h-[8.500px] bg-[#2b2b2b]" />
              <i className="h-[8.500px] bg-[#2b2b2b]" />
            </span>
            <span className="ml-[26px] w-[133px] tracking-[0.6px] whitespace-nowrap">List View</span>
            <span className="ml-[25px] h-[50px] w-[2px] bg-[#e6e6e6]" />
            <svg viewBox="0 0 32 44" className="ml-[29px] h-[44px] w-[32px]">
              <path fillRule="evenodd" d="M16 44L2.500 24.500C-4 12 4 0 16 0C28 0 36 12 29.500 24.500ZM16 10A6 6 0 1 0 16 22A6 6 0 1 0 16 10Z" fill="#168cc5" />
            </svg>
            <span className="ml-[17px] tracking-[1.2px] whitespace-nowrap text-[#168cc5]">Map View</span>
            <label className="ml-auto flex items-center">
              <span className="h-[46px] w-[46px] rounded-[8px] border-[2.5px] border-[#c2c2c2]" />
              <span className="ml-[28px] whitespace-nowrap"><span className="mr-[3px] tracking-[1.15px]">Only show stores with </span><b className="tracking-[1.15px]">available stock</b></span>
            </label>
          </div>

          <section className="relative mt-[48px] ml-[159px] flex h-[1300px] w-[1947px] shrink-0 rounded-t-[50px] border-2 border-[#dedede] bg-white shadow-[-6px_0_26px_rgba(0,0,0,0.07)]">
            <ul className="w-[731px] shrink-0 pt-[108px] pl-[50px]">
              {stores.map((s) => <StoreRow key={s.n} {...s} />)}
            </ul>
            <div className="relative h-[1258px] w-[1212px] overflow-hidden rounded-tr-[48px]">
              <CityMap />
              <div className="absolute top-[1112px] right-0 flex h-[180px] w-[94px] flex-col items-center rounded-tl-[14px] bg-linear-to-b from-white to-[#f7f7f7] pl-[14px]">
                <svg viewBox="0 0 30 30" className="mt-[37px] h-[30px] w-[30px]" stroke="#2b2b2b" strokeWidth="4.500">
                  <path d="M15 0V30M0 15H30" />
                </svg>
                <span className="mt-[41px] h-[2px] w-[71px] bg-[#cfcfcf]" />
              </div>
            </div>
          </section>
        </main>
        <span className="absolute top-[1792px] left-[27px] h-[13px] w-[2295px] rounded-b-[8px] bg-[#9bcbf3]" />
      </div>
      <svg viewBox="0 0 2688 34" className="mt-auto block h-[34px] w-[2688px] shrink-0" preserveAspectRatio="none">
        <path d="M0 5L15 4L27 1L34 5L45 6L55 3L70 5L88 1L110 5L130 4L142 6L152 8L165 4L185 5L203 0L215 5L225 7L240 4L262 5L280 1L295 6L310 4L328 6L345 1L365 4L400 5L430 2L460 5L500 3L540 6L580 1L620 5L670 3L710 6L760 2L810 5L860 1L900 6L960 3L1010 5L1060 1L1110 6L1160 4L1220 1L1270 5L1330 3L1380 6L1430 1L1490 5L1550 3L1600 6L1660 1L1710 5L1770 4L1820 1L1880 6L1940 3L2000 5L2050 1L2110 5L2160 4L2195 4L2214 1L2228 5L2242 2L2260 6L2280 1L2310 4L2330 6L2342 8L2356 4L2375 5L2390 0L2408 6L2425 4L2450 5L2470 1L2490 5L2540 3L2590 6L2640 2L2688 5V34H0Z" fill="#9bcef8" />
      </svg>
    </div>
  );
}
